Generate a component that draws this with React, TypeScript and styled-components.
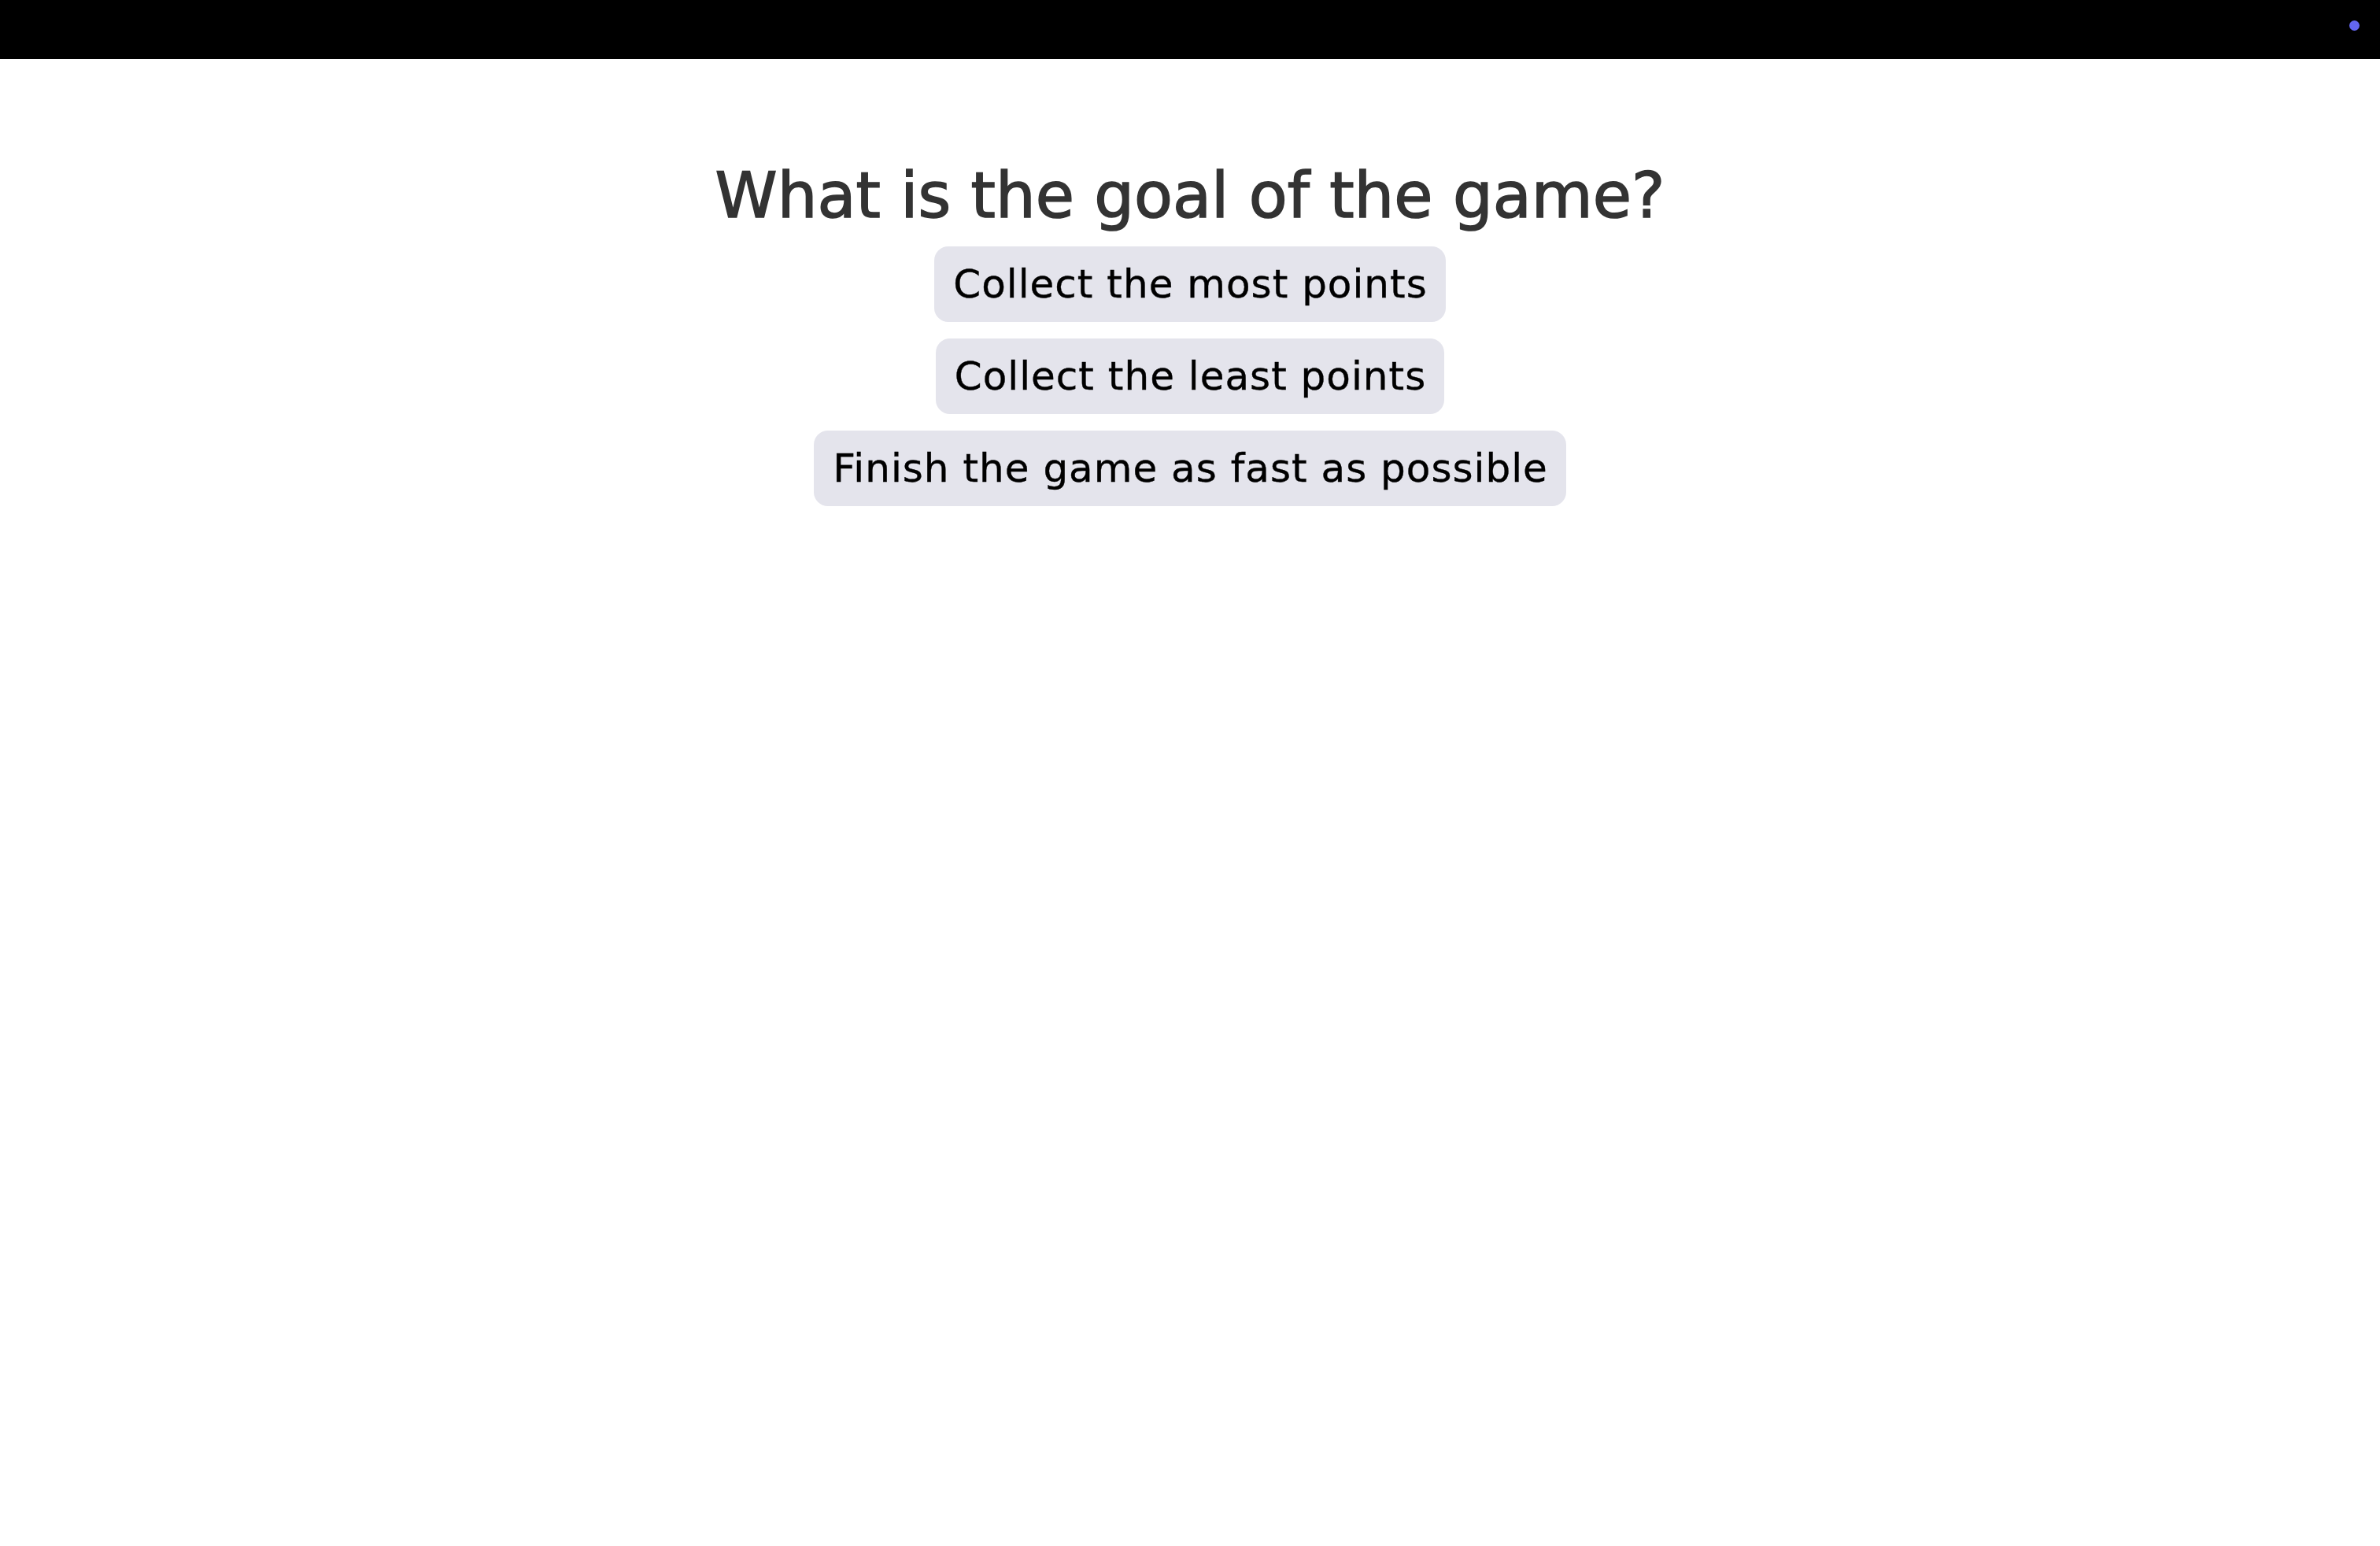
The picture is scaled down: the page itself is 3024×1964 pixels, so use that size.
import React from "react";
import styled, { createGlobalStyle } from "styled-components";

const GlobalStyle = createGlobalStyle`
  html, body {
    margin: 0;
    padding: 0;
    background: #ffffff;
  }
  body {
    font-family: "DejaVu Sans", "Liberation Sans", sans-serif;
  }
`;

const Page = styled.div`
  min-height: 100vh;
  display: flex;
  flex-direction: column;
  background: #ffffff;
`;

const TopBar = styled.header`
  height: 75px;
  background: #000000;
  display: flex;
  justify-content: flex-end;
  align-items: flex-start;
  padding: 26px 26px 0 0;
  box-sizing: border-box;
`;

const StatusDot = styled.span`
  width: 13px;
  height: 13px;
  border-radius: 50%;
  background: #6366f1;
`;

const Main = styled.main`
  display: flex;
  flex-direction: column;
  align-items: center;
  padding-top: 126px;
`;

const Question = styled.h1`
  margin: 0 0 16px;
  font-family: "DejaVu Sans", "Liberation Sans", sans-serif;
  font-weight: 400;
  font-size: 80px;
  line-height: 96px;
  color: #333333;
  -webkit-text-stroke: 1.6px #333333;
`;

const Options = styled.div`
  display: flex;
  flex-direction: column;
  align-items: center;
  gap: 21px;
`;

const Option = styled.button`
  appearance: none;
  border: none;
  margin: 0;
  cursor: pointer;
  background: #e4e4ec;
  border-radius: 18px;
  padding: 12px 23px 12px 24px;
  font-family: "DejaVu Sans", "Liberation Sans", sans-serif;
  font-size: 50px;
  line-height: 72px;
  letter-spacing: 1px;
  color: #000000;
  -webkit-text-stroke: 0.4px #000000;
`;

const options = [
  "Collect the most points",
  "Collect the least points",
  "Finish the game as fast as possible",
];

export default function App() {
  return (
    <>
      <GlobalStyle />
      <Page>
        <TopBar>
          <StatusDot />
        </TopBar>
        <Main>
          <Question>What is the goal of the game?</Question>
          <Options>
            {options.map((o) => (
              <Option key={o}>{o}</Option>
            ))}
          </Options>
        </Main>
      </Page>
    </>
  );
}
